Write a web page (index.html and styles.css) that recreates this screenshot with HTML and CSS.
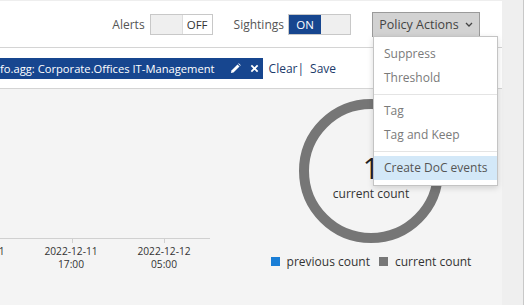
FILE: index.html
```html
<!DOCTYPE html>
<html lang="en">
<head>
    <meta charset="UTF-8">
    <title>Sightings</title>
    <link rel="stylesheet" href="styles.css">
</head>
<body>
    <div class="page">
        <div class="main">
            <!-- Barra superior -->
            <div class="topbar">
                <span class="toggle-label">Alerts</span>
                <div class="toggle">
                    <span class="toggle-side"></span>
                    <span class="toggle-side toggle-text">OFF</span>
                </div>
                <span class="toggle-label sightings">Sightings</span>
                <div class="toggle">
                    <span class="toggle-side toggle-on">ON</span>
                    <span class="toggle-side"></span>
                </div>
                <div class="policy">
                    <button class="policy-btn">Policy Actions
                        <svg width="8" height="5" viewBox="0 0 8 5"><polyline points="1,1 4,4 7,1" fill="none" stroke="#444" stroke-width="1.3"/></svg>
                    </button>
                    <ul class="menu">
                        <li>Suppress</li>
                        <li>Threshold</li>
                        <li class="divider"></li>
                        <li>Tag</li>
                        <li>Tag and Keep</li>
                        <li class="divider"></li>
                        <li class="active">Create DoC events</li>
                    </ul>
                </div>
            </div>

            <!-- Filtros -->
            <div class="filterbar">
                <div class="chip">
                    <span class="chip-text">fo.agg: Corporate.Offices IT-Management</span>
                    <svg class="chip-icon" width="11" height="11" viewBox="0 0 12 12"><path d="M1 11 L1.6 8.2 L8.2 1.6 L10.4 3.8 L3.8 10.4 Z" fill="#fff"/><path d="M8.9 0.9 L9.6 0.2 L11.8 2.4 L11.1 3.1 Z" fill="#fff"/></svg>
                    <svg class="chip-icon" width="9" height="9" viewBox="0 0 10 10"><path d="M1.5 1.5 L8.5 8.5 M8.5 1.5 L1.5 8.5" stroke="#fff" stroke-width="2"/></svg>
                </div>
                <a class="link">Clear|</a>
                <a class="link">Save</a>
            </div>

            <!-- Graficos -->
            <div class="charts">
                <div class="timeline">
                    <svg width="230" height="216">
                        <line x1="0" y1="149.5" x2="210" y2="149.5" stroke="#d0d0d0"/>
                        <line x1="72.5" y1="149" x2="72.5" y2="154" stroke="#d0d0d0"/>
                        <line x1="164.5" y1="149" x2="164.5" y2="154" stroke="#d0d0d0"/>
                        <g class="axis-text" text-anchor="middle">
                            <text x="-22" y="166">2022-12-11</text>
                            <text x="-22" y="179">05:00</text>
                            <text x="71" y="166">2022-12-11</text>
                            <text x="71" y="179">17:00</text>
                            <text x="164" y="166">2022-12-12</text>
                            <text x="164" y="179">05:00</text>
                        </g>
                    </svg>
                </div>
                <div class="donut-panel">
                    <svg class="donut" width="144" height="144">
                        <circle cx="72" cy="72" r="67" fill="none" stroke="#767676" stroke-width="10"/>
                        <text class="donut-num" x="72" y="80" text-anchor="middle">1</text>
                        <text class="donut-label" x="72" y="99" text-anchor="middle">current count</text>
                    </svg>
                    <div class="legend">
                        <span class="legend-item"><i class="swatch prev"></i>previous count</span>
                        <span class="legend-item"><i class="swatch curr"></i>current count</span>
                    </div>
                </div>
            </div>
        </div>
        <div class="side"></div>
    </div>
</body>
</html>
```

FILE: styles.css
```css
body {
    margin: 0;
    background-color: #fff;
    font-family: 'Open Sans', sans-serif;
    font-size: 12px;
    color: #333;
}

.page {
    display: flex;
    height: 305px;
    overflow: hidden;
}

.main {
    width: 502px;
    display: flex;
    flex-direction: column;
}

.side {
    width: 21px;
    background-color: #efefef;
    border-right: 1px solid #c8c8c8;
}

/* barra superior */
.topbar {
    border-top: 1px solid #eee;
    border-bottom: 1px solid #d4d4d4;
    box-sizing: border-box;
    height: 48px;
    display: flex;
    justify-content: flex-end;
    align-items: center;
    padding-right: 22px;
    background-color: #fff;
}

.toggle-label {
    font-size: 12px;
    color: #555;
    margin-right: 5px;
}

.sightings {
    margin-left: 21px;
    margin-right: 4px;
}

.toggle {
    display: flex;
    width: 63px;
    height: 21px;
    border: 1px solid #c8c8c8;
    box-sizing: border-box;
}

.toggle-side {
    flex: 1;
    background-color: #efefef;
    font-size: 11.5px;
    line-height: 19px;
    text-align: center;
}

.toggle-text {
    background-color: #fff;
    color: #333;
    border-left: 1px solid #ddd;
    flex: 0 0 29px;
}

.toggle-on {
    flex: 0 0 32px;
    background-color: #17468f;
    color: #fff;
}

.policy {
    position: relative;
    margin-left: 21px;
}

.policy-btn {
    width: 108px;
    height: 25px;
    background-color: #d2d2d2;
    border: 1px solid #9a9a9a;
    font-family: 'Open Sans', sans-serif;
    font-size: 12.5px;
    color: #444;
    display: flex;
    align-items: center;
    justify-content: center;
    gap: 6px;
    padding: 0;
    margin-top: 1px;
}

.menu {
    position: absolute;
    top: 25px;
    left: 1px;
    width: 125px;
    margin: 0;
    padding: 5px 0 5px;
    list-style: none;
    background-color: #fff;
    border: 1px solid #c4c4c4;
    box-shadow: 0 2px 6px rgba(0, 0, 0, 0.15);
    box-sizing: border-box;
    z-index: 5;
}

.menu li {
    height: 24px;
    line-height: 24px;
    padding-left: 10px;
    color: #7a7a7a;
}

.menu li.divider {
    height: 1px;
    background-color: #e4e4e4;
    margin: 4px 0 4px;
    padding: 0;
}

.menu li.active {
    background-color: #d3e8f8;
    color: #555;
}

/* filtros */
.filterbar {
    height: 41px;
    border-bottom: 1px solid #d4d4d4;
    box-sizing: border-box;
    display: flex;
    align-items: center;
    background-color: #fff;
}

.chip {
    display: flex;
    align-items: center;
    height: 21px;
    background-color: #17468f;
    color: #fff;
    padding-right: 4px;
    margin-top: 1px;
}

.chip-text {
    font-size: 11.2px;
    margin-right: 15px;
}

.chip-icon {
    margin-right: 9px;
}

.chip-icon:last-child {
    margin-right: 0;
}

.link {
    color: #1b3a6b;
    margin-left: 6px;
    font-size: 12px;
}

.link + .link {
    margin-left: 6px;
}

/* graficos */
.charts {
    flex: 1;
    display: flex;
    background-color: #f4f4f4;
}

.timeline {
    width: 240px;
}

.timeline svg {
    display: block;
    overflow: visible;
}

.axis-text {
    font-family: 'Open Sans', sans-serif;
    font-size: 10.2px;
    fill: #333;
}

.donut-panel {
    flex: 1;
    display: flex;
    flex-direction: column;
    align-items: center;
    padding-top: 10px;
}

.donut {
    display: block;
}

.donut-num {
    font-family: 'Open Sans', sans-serif;
    font-size: 29px;
    fill: #222;
}

.donut-label {
    font-family: 'Open Sans', sans-serif;
    font-size: 12px;
    fill: #333;
}

.legend {
    display: flex;
    gap: 9px;
    margin-top: 10px;
    color: #333;
}

.legend-item {
    display: flex;
    align-items: center;
}

.swatch {
    width: 9px;
    height: 9px;
    margin-right: 7px;
}

.swatch.prev {
    background-color: #1a7ed6;
}

.swatch.curr {
    background-color: #777;
}
```
